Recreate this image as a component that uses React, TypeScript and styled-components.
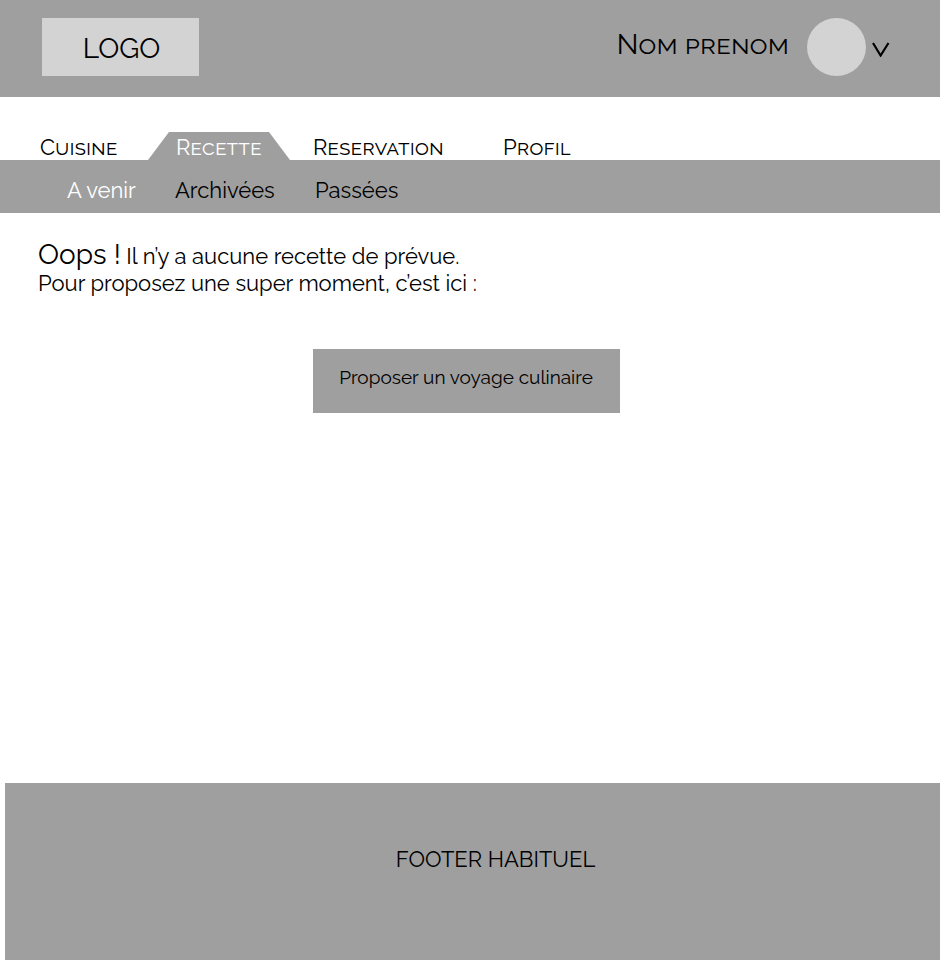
import React from "react";
import styled, { createGlobalStyle } from "styled-components";

const GlobalStyle = createGlobalStyle`
  * { box-sizing: border-box; }
  body {
    margin: 0;
    background: #fff;
    color: #000;
    font-family: Raleway, Lato, sans-serif;
    font-size: 22px;
    line-height: 26px;
  }
  a { color: inherit; text-decoration: none; }
  button { font: inherit; color: inherit; border: 0; padding: 0; cursor: pointer; }
`;

const Page = styled.div`
  min-height: 100vh;
  display: flex;
  flex-direction: column;
`;

const Header = styled.header`
  height: 97px;
  padding: 18px 50px 20px 42px;
  background: #9f9f9f;
  display: flex;
  justify-content: space-between;
  align-items: flex-start;
`;

const Logo = styled.a`
  width: 157px;
  height: 58px;
  padding: 4px 0 0 2px;
  background: #d3d3d3;
  display: flex;
  align-items: center;
  justify-content: center;
  font-size: 28px;
`;

const Account = styled.button`
  background: none;
  display: flex;
  align-items: center;
`;

const UserName = styled.span`
  margin-right: 18px;
  padding-bottom: 4px;
  font-size: 28px;
  line-height: 32px;
  font-variant-caps: small-caps;
`;

const Avatar = styled.span`
  width: 59px;
  height: 58px;
  margin-right: 6px;
  border-radius: 50%;
  background: #d3d3d3;
`;

const Chevron = styled.svg`
  width: 18px;
  height: 16px;
  margin-top: 4px;
`;

const Tabs = styled.nav`
  height: 63px;
  display: grid;
  grid-template-columns: 148px 142px 190px 1fr;
  align-items: end;
`;

const Tab = styled.a<{ $active?: boolean; $indent: number }>`
  display: block;
  height: 28px;
  padding-left: ${(p) => p.$indent}px;
  line-height: 30px;
  font-variant-caps: small-caps;
  color: ${(p) => (p.$active ? "#fff" : "inherit")};
  background: ${(p) => (p.$active ? "#9f9f9f" : "none")};
  clip-path: ${(p) => (p.$active ? "polygon(21px 0, 121px 0, 100% 100%, 0 100%)" : "none")};
`;

const SubNav = styled.nav`
  height: 53px;
  padding: 6px 0 0 67px;
  background: #9f9f9f;
  display: grid;
  grid-template-columns: 108px 140px 1fr;
  align-items: center;
`;

const SubLink = styled.a<{ $active?: boolean }>`
  color: ${(p) => (p.$active ? "#fff" : "inherit")};
`;

const Main = styled.main`
  flex: 1;
  padding: 28px 38px;
`;

const Message = styled.p`
  margin: 0;
  line-height: 27px;
`;

const Lead = styled.span`
  font-size: 28px;
`;

const Propose = styled.button`
  display: block;
  width: 307px;
  height: 64px;
  margin: 52px auto 0;
  padding-bottom: 8px;
  background: #9f9f9f;
  font-size: 19px;
`;

const Action = styled.div`
  padding-right: 8px;
`;

const Footer = styled.footer`
  height: 177px;
  margin-left: 5px;
  padding: 0 0 26px 46px;
  background: #9f9f9f;
  display: flex;
  align-items: center;
  justify-content: center;
`;

const tabs = [
  { label: "Cuisine", indent: 40 },
  { label: "Recette", indent: 28, active: true },
  { label: "Reservation", indent: 23 },
  { label: "Profil", indent: 23 },
];

const filters = ["A venir", "Archivées", "Passées"];

export default function App() {
  return (
    <Page>
      <GlobalStyle />
      <Header>
        <Logo href="#">LOGO</Logo>
        <Account type="button">
          <UserName>Nom prenom</UserName>
          <Avatar />
          <Chevron viewBox="0 0 18 16" fill="none" stroke="#000" strokeWidth="2.2" aria-hidden="true">
            <path d="M1 2 L8.6 14.5 L16.5 2" />
          </Chevron>
        </Account>
      </Header>
      <Tabs>
        {tabs.map((t) => (
          <Tab key={t.label} href="#" $indent={t.indent} $active={t.active}>
            {t.label}
          </Tab>
        ))}
      </Tabs>
      <SubNav>
        {filters.map((f, i) => (
          <SubLink key={f} href="#" $active={i === 0}>
            {f}
          </SubLink>
        ))}
      </SubNav>
      <Main>
        <Message>
          <Lead>Oops !</Lead> Il n’y a aucune recette de prévue.
          <br />
          Pour proposez une super moment, c’est ici :
        </Message>
        <Action>
          <Propose type="button">Proposer un voyage culinaire</Propose>
        </Action>
      </Main>
      <Footer>FOOTER HABITUEL</Footer>
    </Page>
  );
}
